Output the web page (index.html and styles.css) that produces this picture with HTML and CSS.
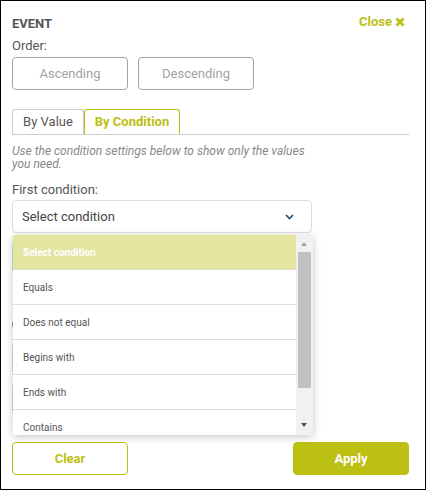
FILE: index.html
```html
<!DOCTYPE html>
<html lang="en">
<head>
<meta charset="utf-8">
<title>Event filter</title>
<link rel="stylesheet" href="styles.css">
</head>
<body>
<div class="panel">
  <div class="header">
    <span class="title">EVENT</span>
    <a class="close">Close
      <svg class="close-x" width="10" height="10" viewBox="0 0 10 10"><path d="M1.5 1.5 L8.5 8.5 M8.5 1.5 L1.5 8.5" stroke="currentColor" stroke-width="2.8" stroke-linecap="butt"/></svg>
    </a>
  </div>
  <div class="label order-label">Order:</div>
  <div class="order-buttons">
    <button class="btn-outline">Ascending</button>
    <button class="btn-outline">Descending</button>
  </div>
  <div class="tabs">
    <div class="tab">By Value</div>
    <div class="tab active">By Condition</div>
  </div>
  <p class="note">Use the condition settings below to show only the values you need.</p>
  <div class="label cond-label">First condition:</div>
  <div class="select-wrap">
    <div class="select">
      <span>Select condition</span>
      <svg class="chev" width="9" height="6" viewBox="0 0 9 6"><path d="M1 1 L4.5 4.5 L8 1" fill="none" stroke="#2c4a6e" stroke-width="1.6"/></svg>
    </div>
    <div class="dropdown">
      <ul class="options">
        <li class="opt selected">Select condition</li>
        <li class="opt">Equals</li>
        <li class="opt">Does not equal</li>
        <li class="opt">Begins with</li>
        <li class="opt">Ends with</li>
        <li class="opt">Contains</li>
      </ul>
      <div class="scrollbar">
        <span class="arrow up"></span>
        <span class="thumb"></span>
        <span class="arrow down"></span>
      </div>
    </div>
  </div>
  <div class="hidden-area">
    <div class="field"></div>
    <div class="radios"><span class="radio"></span><span class="radio"></span></div>
    <div class="field second"></div>
    <div class="field"></div>
  </div>
  <div class="footer">
    <button class="btn-clear">Clear</button>
    <button class="btn-apply">Apply</button>
  </div>
</div>
</body>
</html>
```
FILE: styles.css
```css
* { box-sizing: border-box; }
html, body { margin: 0; padding: 0; background: #fff; }
body { font-family: Roboto, "Liberation Sans", Arial, sans-serif; }

.panel {
  width: 426px;
  height: 490px;
  border: 1px solid #000;
  padding: 15px 16px 14px 11px;
  display: flex;
  flex-direction: column;
  position: relative;
}

.header {
  display: flex;
  justify-content: space-between;
  align-items: flex-start;
  height: 16px;
}
.title {
  font-size: 13px;
  font-weight: bold;
  color: #555;
  line-height: 16px;
}
.close {
  font-size: 13px;
  font-weight: bold;
  color: #bbc013;
  line-height: 16px;
  margin-top: -2px;
  margin-right: 4px;
  display: flex;
  align-items: center;
  gap: 3px;
}
.close-x { display: block; }

.label {
  font-size: 13px;
  color: #555;
  line-height: 16px;
}
.order-label { margin-top: 6px; }

.order-buttons {
  display: flex;
  gap: 10px;
  margin-top: 3px;
}
.btn-outline {
  width: 116px;
  height: 33px;
  border: 1px solid #a3a3a3;
  border-radius: 4px;
  background: #fff;
  color: #a3a3a3;
  font-family: inherit;
  font-size: 13px;
  padding: 0;
}

.tabs {
  display: flex;
  margin-top: 19px;
  border-bottom: 1px solid #ccc;
}
.tab {
  border: 1px solid #ccc;
  border-bottom: none;
  border-radius: 3px 3px 0 0;
  padding: 4px 0;
  font-size: 13px;
  line-height: 16px;
  color: #555;
  width: 72px;
  text-align: center;
  white-space: nowrap;
  height: 25px;
}
.tab.active {
  border-color: #bbc013;
  color: #bbc013;
  font-weight: bold;
  width: 96px;
}

.note {
  margin: 10px 0 0;
  font-size: 12px;
  line-height: 12.5px;
  font-style: italic;
  color: #888;
  width: 300px;
}
.cond-label { margin-top: 12px; }

.select-wrap {
  position: relative;
  margin-top: 2px;
  width: 300px;
}
.select {
  height: 33px;
  border: 1px solid #ddd;
  border-radius: 4px;
  display: flex;
  align-items: center;
  justify-content: space-between;
  padding: 0 17px 0 9px;
  font-size: 13px;
  color: #444;
}
.chev { display: block; margin-top: 1px; }

.dropdown {
  position: absolute;
  top: 35px;
  left: 1px;
  width: 300px;
  height: 200px;
  display: flex;
  background: #fff;
  box-shadow: 0 2px 8px rgba(0, 0, 0, 0.22);
  z-index: 5;
}
.options {
  list-style: none;
  margin: 0;
  padding: 0;
  width: 283px;
  overflow: hidden;
}
.opt {
  height: 35px;
  border-bottom: 1px solid #ddd;
  padding-left: 10px;
  display: flex;
  align-items: center;
  font-size: 10px;
  color: #555;
}
.opt.selected {
  background: #e3e5a1;
  color: #fff;
  font-weight: bold;
}
.scrollbar {
  width: 17px;
  background: #f1f1f1;
  position: relative;
}
.thumb {
  position: absolute;
  left: 2px;
  right: 2px;
  top: 17px;
  height: 136px;
  background: #c1c1c1;
}
.arrow {
  position: absolute;
  left: 5px;
  width: 0;
  height: 0;
  border-left: 3.5px solid transparent;
  border-right: 3.5px solid transparent;
}
.arrow.up {
  top: 7px;
  border-bottom: 4px solid #a3a3a3;
}
.arrow.down {
  bottom: 8px;
  border-top: 4px solid #505050;
}

.hidden-area {
  width: 300px;
  margin-top: 8px;
}
.field {
  height: 33px;
  border: 1px solid #ddd;
  border-radius: 4px;
}
.radios {
  margin-top: 42px;
  display: flex;
  gap: 40px;
  height: 16px;
  align-items: center;
}
.radio {
  width: 13px;
  height: 13px;
  border: 1px solid #777;
  border-radius: 50%;
}
.field.second { margin-top: 10px; }
.field + .field { margin-top: 7px; }

.footer {
  margin-top: auto;
  display: flex;
  justify-content: space-between;
}
.btn-clear, .btn-apply {
  width: 116px;
  height: 33px;
  border-radius: 4px;
  font-family: inherit;
  font-size: 13px;
  font-weight: bold;
  padding: 0;
}
.btn-clear {
  border: 1px solid #bbc013;
  background: #fff;
  color: #bbc013;
}
.btn-apply {
  border: 1px solid #bbc013;
  background: #bbc013;
  color: #fff;
}
```
